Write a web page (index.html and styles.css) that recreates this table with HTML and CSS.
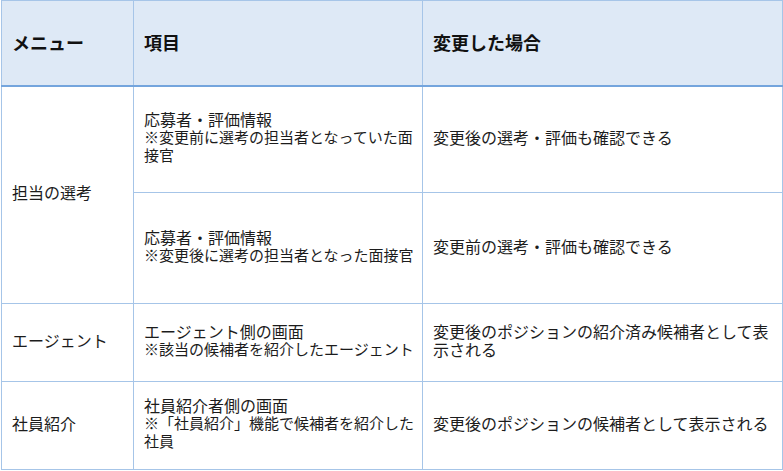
FILE: index.html
```html
<!DOCTYPE html>
<html lang="ja">
<head>
<meta charset="utf-8">
<link rel="stylesheet" href="styles.css">
</head>
<body>
<table class="spec">
  <colgroup>
    <col class="c-menu">
    <col class="c-item">
    <col class="c-result">
  </colgroup>
  <thead>
    <tr class="r-head">
      <th>メニュー</th>
      <th>項目</th>
      <th>変更した場合</th>
    </tr>
  </thead>
  <tbody>
    <tr class="r-1">
      <td rowspan="2">担当の選考</td>
      <td><span class="line">応募者・評価情報</span><span class="note">※変更前に選考の担当者となっていた面<br>接官</span></td>
      <td>変更後の選考・評価も確認できる</td>
    </tr>
    <tr class="r-2">
      <td><span class="line">応募者・評価情報</span><span class="note">※変更後に選考の担当者となった面接官</span></td>
      <td>変更前の選考・評価も確認できる</td>
    </tr>
    <tr class="r-3">
      <td>エージェント</td>
      <td><span class="line">エージェント側の画面</span><span class="note">※該当の候補者を紹介したエージェント</span></td>
      <td>変更後のポジションの紹介済み候補者として表<br>示される</td>
    </tr>
    <tr class="r-4">
      <td>社員紹介</td>
      <td><span class="line">社員紹介者側の画面</span><span class="note">※「社員紹介」機能で候補者を紹介した<br>社員</span></td>
      <td>変更後のポジションの候補者として表示される</td>
    </tr>
  </tbody>
</table>
</body>
</html>
```

FILE: styles.css
```css
html, body {
  margin: 0;
  padding: 0;
  background: #ffffff;
}

body {
  font-family: "Noto Sans CJK JP", "Noto Sans", sans-serif;
  color: #1c1c1c;
}

.spec {
  margin-left: 1px;
  width: 781px;
  border-collapse: collapse;
  table-layout: fixed;
}

.c-menu { width: 132px; }
.c-item { width: 289px; }
.c-result { width: 360px; }

.spec th,
.spec td {
  border: 1px solid #a6c5e8;
  padding: 0 6px 5px 10px;
  vertical-align: middle;
  text-align: left;
  white-space: nowrap;
}

.spec th {
  background: #dee9f6;
  font-size: 18px;
  font-weight: 700;
  color: #111;
  line-height: 24px;
  padding-bottom: 1px;
}

.spec thead tr th {
  border-bottom: 2px solid #74a5dd;
}

.spec td {
  font-size: 16px;
  line-height: 18px;
}

.line {
  display: block;
}

.note {
  display: block;
  font-size: 15px;
  line-height: 18px;
}

.r-head { height: 85px; }
.r-1 { height: 107px; }
.r-2 { height: 111px; }
.r-3 { height: 78px; }
.r-4 { height: 88px; }
```
